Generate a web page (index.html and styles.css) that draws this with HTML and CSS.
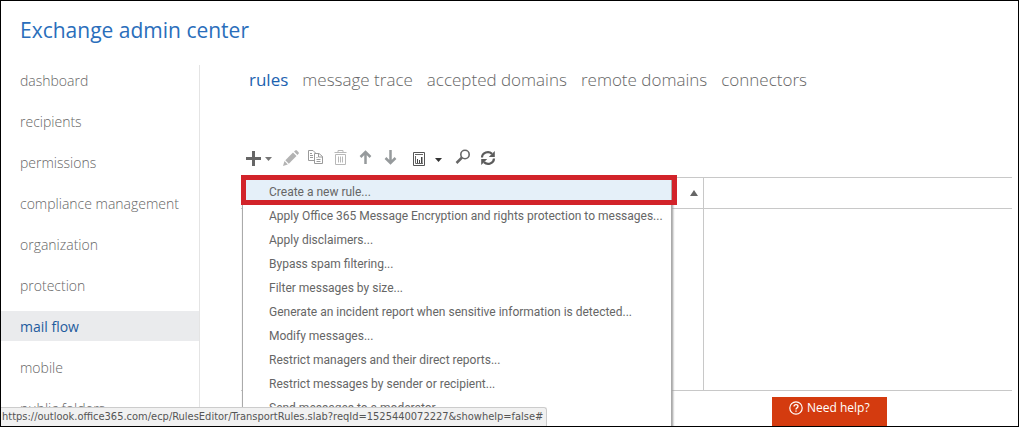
FILE: index.html
```html
<!DOCTYPE html>
<html lang="en">
<head>
<meta charset="utf-8">
<title>Exchange admin center</title>
<link rel="stylesheet" href="styles.css">
</head>
<body>
<div class="app">
  <header class="header"><h1 class="title">Exchange admin center</h1></header>
  <div class="body">
    <nav class="sidebar" aria-label="Features">
      <a class="nav-item" href="#">dashboard</a>
      <a class="nav-item" href="#">recipients</a>
      <a class="nav-item" href="#">permissions</a>
      <a class="nav-item" href="#">compliance management</a>
      <a class="nav-item" href="#">organization</a>
      <a class="nav-item" href="#">protection</a>
      <a class="nav-item nav-item-active" href="#" aria-current="page">mail flow</a>
      <a class="nav-item" href="#">mobile</a>
      <a class="nav-item" href="#">public folders</a>
    </nav>
    <main class="main">
      <nav class="tabs" aria-label="Mail flow">
        <a class="tab tab-active" href="#" aria-current="page">rules</a>
        <a class="tab" href="#">message trace</a>
        <a class="tab" href="#">accepted domains</a>
        <a class="tab" href="#">remote domains</a>
        <a class="tab" href="#">connectors</a>
      </nav>
      <div class="toolbar">
        <button class="tool tool-add" aria-label="New" aria-expanded="true">
          <svg width="28" height="18" viewBox="0 0 28 18"><path d="M1 9.500h15M8.500 2v15" stroke="#666" stroke-width="3" fill="none"/><path d="M20 8h7l-3.500 4z" fill="#777"/></svg>
        </button>
        <button class="tool" aria-label="Edit">
          <svg width="18" height="18" viewBox="0 0 18 18" fill="#b3b3b3"><path d="M1 17l1.500-5L5.800 15.500z"/><path d="M3.300 11.200L11 3.500l3.500 3.500-7.700 7.800z"/><path d="M12 2.600l1.300-1.200q.8-.6 1.600.1l1.700 1.700q.7.8 0 1.500l-1.200 1.300z"/></svg>
        </button>
        <button class="tool" aria-label="Copy">
          <svg width="18" height="18" viewBox="0 0 18 18" fill="none" stroke="#9a9a9a"><path d="M7 11.500H1.500v-10h4.500l2.500 2.500"/><path d="M3 4.500h2M3 6.500h3M3 8.500h3"/><path d="M7.500 4.500h4.500l3.500 3v7h-8zM11.500 4.500v3.500h4M9.500 8.500h1M9.500 10.500h4M9.500 12.500h4"/></svg>
        </button>
        <button class="tool" aria-label="Delete">
          <svg width="18" height="18" viewBox="0 0 18 18" fill="none" stroke="#b8b8b8"><path d="M2.500 3.500h12M6 3V1.500h5V3"/><path d="M3.500 5.500v10h10v-10zM6.500 7.500v6M8.500 7.500v6M10.500 7.500v6"/></svg>
        </button>
        <button class="tool" aria-label="Move up">
          <svg width="18" height="18" viewBox="0 0 18 18" fill="none" stroke="#969a9c" stroke-width="2.500"><path d="M8.500 15V3M3.500 8l5-5 5 5"/></svg>
        </button>
        <button class="tool" aria-label="Move down">
          <svg width="18" height="18" viewBox="0 0 18 18" fill="none" stroke="#969a9c" stroke-width="2.500"><path d="M8.500 1v12.500M3.500 9l5 5 5-5"/></svg>
        </button>
        <button class="tool tool-report" aria-label="Reports">
          <svg width="32" height="18" viewBox="0 0 32 18"><path d="M2.500 3.500h11v13h-11z" fill="none" stroke="#555"/><path d="M4 5.500h8M4.500 7v7.500H12" fill="none" stroke="#666"/><path d="M6 10h1v4H6zM8 11h1v3H8zM10 8h1.500v6H10z" fill="#444"/><path d="M24 9h7l-3.500 4z" fill="#333"/></svg>
        </button>
        <button class="tool" aria-label="Search">
          <svg width="18" height="18" viewBox="0 0 18 18" fill="none" stroke="#666"><circle cx="11" cy="5.500" r="4.200" stroke-width="1.600"/><path d="M8 8.500L2.500 14" stroke-width="2.500"/></svg>
        </button>
        <button class="tool" aria-label="Refresh">
          <svg width="18" height="18" viewBox="0 0 18 18"><path d="M3 8.500a5.800 5.500 0 0 1 10-3.600M15 9.500a5.800 5.500 0 0 1-10 3.600" fill="none" stroke="#5c5c5c" stroke-width="2.200"/><path d="M15.800 2v6h-6zM2.200 16v-6h6z" fill="#5c5c5c"/></svg>
        </button>
        <ul class="menu">
          <li><a class="menu-item menu-item-active" href="#">Create a new rule...</a></li>
          <li><a class="menu-item" href="#">Apply Office 365 Message Encryption and rights protection to messages...</a></li>
          <li><a class="menu-item" href="#">Apply disclaimers...</a></li>
          <li><a class="menu-item" href="#">Bypass spam filtering...</a></li>
          <li><a class="menu-item" href="#">Filter messages by size...</a></li>
          <li><a class="menu-item" href="#">Generate an incident report when sensitive information is detected...</a></li>
          <li><a class="menu-item" href="#">Modify messages...</a></li>
          <li><a class="menu-item" href="#">Restrict managers and their direct reports...</a></li>
          <li><a class="menu-item" href="#">Restrict messages by sender or recipient...</a></li>
          <li><a class="menu-item" href="#">Send messages to a moderator</a></li>
        </ul>
      </div>
      <section class="list" aria-label="Rules">
        <div class="list-head">
          <button class="sort" aria-label="Sort ascending"><svg width="8" height="6" viewBox="0 0 8 6"><path d="M4 0l4 6H0z" fill="#666"/></svg></button>
        </div>
        <div class="detail-head"></div>
        <div class="list-body"></div>
        <div class="detail-body"></div>
      </section>
      <footer class="footer">
        <button class="help">
          <svg width="14" height="14" viewBox="0 0 14 14" fill="none" stroke="#fff"><circle cx="7" cy="7" r="6.200" stroke-width="1.200"/><path d="M5 5.600q0-2 2-2t2 1.700q0 .9-1 1.600t-1 1.500M7 9.500v1.300" stroke-width="1.300"/></svg>
          Need help?
        </button>
      </footer>
    </main>
  </div>
  <div class="status">https://outlook.office365.com/ecp/RulesEditor/TransportRules.slab?reqId=1525440072227&amp;showhelp=false#</div>
</div>
</body>
</html>
```

FILE: styles.css
```css
*, *::before { box-sizing: border-box; }
body {
  margin: 0;
  background: #fff;
  color: #666;
  font-family: "Open Sans", "Noto Sans", sans-serif;
  font-size: 12px;
}
a { color: inherit; text-decoration: none; }
button { padding: 0; border: 0; background: none; font: inherit; }
svg { display: block; }
.app {
  position: relative;
  display: flex;
  flex-direction: column;
  height: 100vh;
  overflow: hidden;
  border: 1px solid #000;
}
.header { flex: none; padding: 13px 19px 19px; }
.title { margin: 0; color: #2a6ebb; font-size: 21px; line-height: 32px; font-weight: 400; }
.body { display: flex; flex: 1; min-height: 0; }
.sidebar {
  display: flex;
  flex: none;
  flex-direction: column;
  gap: 11px;
  width: 199px;
  border-right: 1px solid #e4e4e4;
  overflow: hidden;
}
.nav-item { flex: none; padding: 2px 0 0 19px; font-size: 14px; line-height: 28px; font-weight: 300; }
.nav-item-active { background: #eaebed; color: #1f5c9e; font-weight: 400; }
.main { display: flex; flex: 1; flex-direction: column; min-width: 0; padding: 0 6px 0 41px; }
.tabs { display: flex; gap: 14px; padding-left: 8px; font-size: 17px; line-height: 30px; font-weight: 300; }
.tab { white-space: nowrap; }
.tab-active { color: #1c62b0; font-weight: 400; }
.toolbar {
  position: relative;
  display: flex;
  align-items: center;
  gap: 7px;
  height: 29px;
  margin-top: 53px;
  padding: 0 0 10px 4px;
}
.tool-add { margin-right: 2px; }
.tool-report { margin: 0 4px; }
.menu {
  position: absolute;
  top: 100%;
  left: 1px;
  z-index: 2;
  width: 430px;
  margin: 0;
  padding: 2px 0 24px;
  border: 1px solid #aaa;
  border-top: 0;
  background: #fff;
  box-shadow: 1px 1px 2px #999;
  list-style: none;
}
.menu::before {
  content: "";
  position: absolute;
  top: -2px;
  right: -6px;
  left: -2px;
  height: 30px;
  border: 5px solid #d2232a;
}
.menu-item {
  display: block;
  padding: 2px 0 0 26px;
  font-family: Roboto, "Open Sans", sans-serif;
  line-height: 22px;
  white-space: nowrap;
}
.menu-item-active { background: #e5f0f9; }
.list {
  display: grid;
  grid-template: 31px 1fr / 3fr 2fr;
  flex: 1;
  border-top: 1px solid #c8c8c8;
  border-bottom: 1px solid #c8c8c8;
}
.list-head, .detail-head { border-bottom: 1px solid #c8c8c8; }
.list-head { display: flex; align-items: center; justify-content: flex-end; padding-right: 5px; }
.list-head, .list-body { border-right: 1px solid #c8c8c8; }
.footer { display: flex; justify-content: flex-end; padding: 6px 125px 0 0; }
.help {
  display: flex;
  gap: 4px;
  width: 115px;
  height: 29px;
  padding: 4px 0 0 17px;
  background: #d43b0f;
  color: #fff;
  line-height: 14px;
}
.status {
  position: absolute;
  left: 0;
  bottom: 0;
  z-index: 3;
  padding: 0 3px 0 1px;
  border: solid #ccc;
  border-width: 1px 1px 0 0;
  border-radius: 0 3px 0 0;
  background: #f1f1f1;
  color: #555;
  font-family: "DejaVu Sans Condensed", "DejaVu Sans", sans-serif;
  font-size: 11px;
  line-height: 18px;
  white-space: nowrap;
}
```
